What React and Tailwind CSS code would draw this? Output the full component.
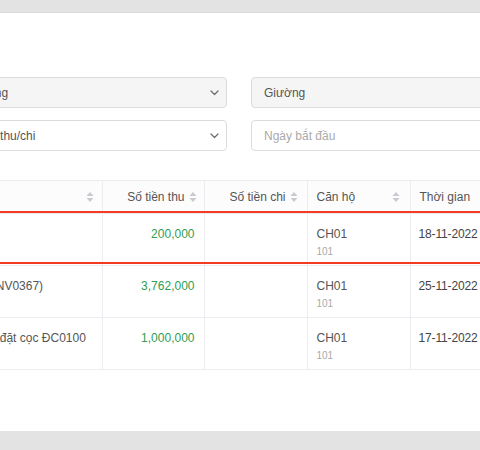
const SortIcon = () => (
  <svg width="8" height="12" viewBox="0 0 8 12" className="shrink-0">
    <path d="M4 1 L7.5 5 L0.5 5 Z" fill="#c9c9cf" />
    <path d="M4 11 L7.5 7 L0.5 7 Z" fill="#c9c9cf" />
  </svg>
);

const Chevron = () => (
  <svg width="9" height="6" viewBox="0 0 9 6" className="shrink-0">
    <path d="M1 1 L4.5 4.5 L8 1" fill="none" stroke="#6b6b6b" strokeWidth="1.2" strokeLinecap="round" strokeLinejoin="round" />
  </svg>
);

const rows = [
  { note: "Tiền phòng tháng 11", thu: "200,000", chi: "", can: "CH01", phong: "101", date: "18-11-2022" },
  { note: "Tiền phòng tháng 11 (HĐ NV0367)", thu: "3,762,000", chi: "", can: "CH01", phong: "101", date: "25-11-2022" },
  { note: "Khách thuê phòng trả tiền đặt cọc ĐC0100", thu: "1,000,000", chi: "", can: "CH01", phong: "101", date: "17-11-2022" },
];

const App = () => {
  return (
    <div className="h-[450px] bg-[#e3e3e3] pt-3 overflow-hidden font-['Liberation_Sans',Arial,sans-serif] text-[#555]">
      <div className="h-[419px] bg-white border-t border-[#d9d9d9] overflow-hidden pt-[64px]">
        {/* Filters */}
        <div className="ml-[-75px] w-[628px] grid grid-cols-[302px_302px] gap-x-6 gap-y-3 text-[12px]">
          <div className="h-[31px] rounded border border-[#dcdcdc] bg-[#f5f5f5] flex items-center justify-between pl-3 pr-[7px]">
            <span className="text-[#555] whitespace-nowrap">Tất cả phòng</span>
            <Chevron />
          </div>
          <div className="h-[31px] rounded border border-[#dcdcdc] bg-[#f5f5f5] flex items-center pl-3">
            <span className="text-[#555]">Giường</span>
          </div>
          <div className="h-[31px] rounded border border-[#dcdcdc] bg-white flex items-center justify-between pl-3 pr-[7px]">
            <span className="text-[#555] whitespace-nowrap">Loại khoản thu/chi</span>
            <Chevron />
          </div>
          <div className="h-[31px] rounded border border-[#dcdcdc] bg-white flex items-center pl-3">
            <span className="text-[#aaa]">Ngày bắt đầu</span>
          </div>
        </div>

        {/* Table */}
        <table className="ml-[-153px] mt-[29px] w-[806px] min-w-[806px] table-fixed border-collapse text-[12px]">
          <colgroup>
            <col className="w-[255px]" />
            <col className="w-[102px]" />
            <col className="w-[103px]" />
            <col className="w-[103px]" />
            <col className="w-[103px]" />
            <col className="w-[140px]" />
          </colgroup>
          <thead>
            <tr className="h-[33px] bg-[#fcfcfd] border-t border-b border-[#ececf1]">
              <th className="border-r border-[#ececf1] px-2 font-normal">
                <div className="flex items-center justify-between pl-1">
                  <span>Nội dung</span>
                  <SortIcon />
                </div>
              </th>
              <th className="border-r border-[#ececf1] pl-2 pr-[7px] font-normal">
                <div className="flex items-center justify-end gap-1 whitespace-nowrap">
                  <span>Số tiền thu</span>
                  <SortIcon />
                </div>
              </th>
              <th className="border-r border-[#ececf1] pl-2 pr-[9px] font-normal">
                <div className="flex items-center justify-end gap-1 whitespace-nowrap">
                  <span>Số tiền chi</span>
                  <SortIcon />
                </div>
              </th>
              <th className="border-r border-[#ececf1] pl-[9px] pr-[10px] font-normal">
                <div className="flex items-center justify-between">
                  <span>Căn hộ</span>
                  <SortIcon />
                </div>
              </th>
              <th className="border-r border-[#ececf1] pl-[9px] font-normal text-left whitespace-nowrap">Thời gian</th>
              <th className="font-normal"></th>
            </tr>
          </thead>
          <tbody>
            {rows.map((r, i) => (
              <tr key={i} className="h-[52px] border-b border-[#ececf1] align-top">
                <td className="border-r border-[#ececf1] pl-3 pt-[11px] whitespace-nowrap text-[#555] relative">
                  {i === 0 && (
                    <div className="absolute left-[-4px] top-[-3px] w-[720px] h-[53px] border-2 border-[#f23b22] pointer-events-none z-10" />
                  )}
                  <div className="overflow-hidden">{r.note}</div>
                </td>
                <td className="border-r border-[#ececf1] pr-[9px] pt-[11px] text-right text-[#2f9d52]">{r.thu}</td>
                <td className="border-r border-[#ececf1] pt-[11px]">{r.chi}</td>
                <td className="border-r border-[#ececf1] pl-[9px] pt-[11px]">
                  <div className="text-[#555]">{r.can}</div>
                  <div className="text-[10px] text-[#aaa] mt-[1px]">{r.phong}</div>
                </td>
                <td className="border-r border-[#ececf1] pl-[8px] pt-[11px] text-[#444] whitespace-nowrap tracking-[-0.15px]">{r.date}</td>
                <td></td>
              </tr>
            ))}
          </tbody>
        </table>
      </div>
    </div>
  );
};

export default App;
